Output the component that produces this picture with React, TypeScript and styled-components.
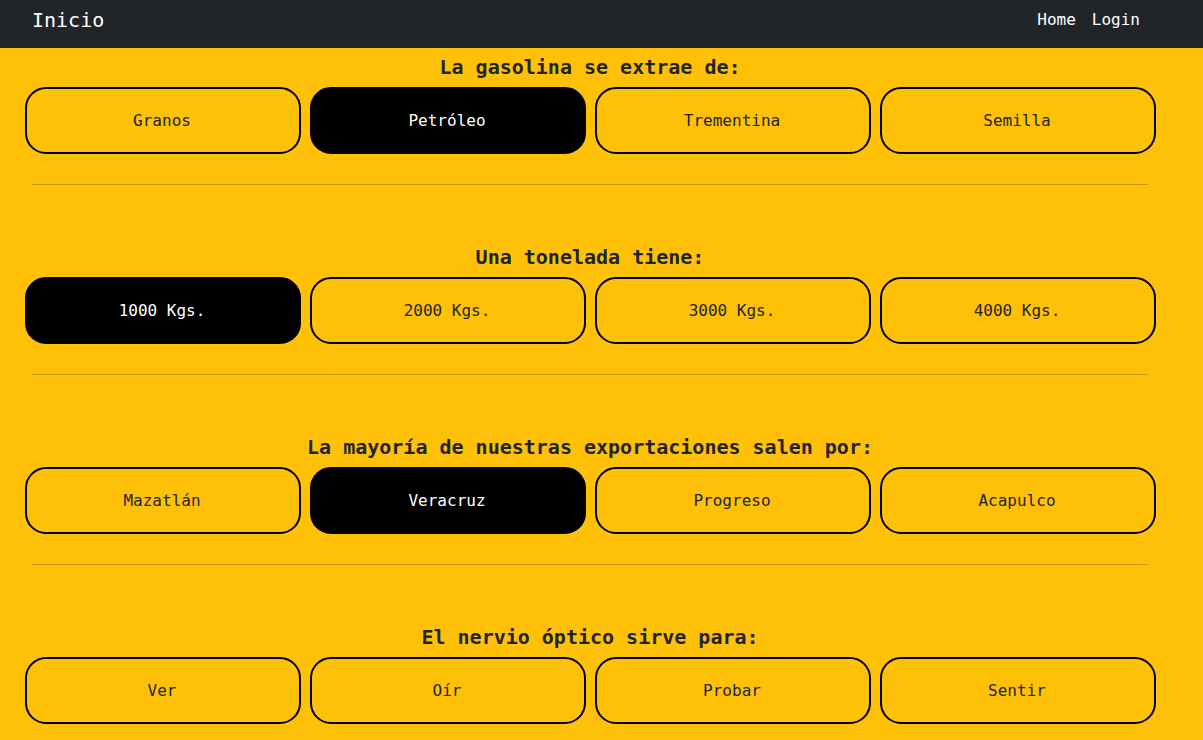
import styled, { createGlobalStyle } from "styled-components";

const GlobalStyle = createGlobalStyle`
  html, body {
    margin: 0;
    padding: 0;
    background: #ffc107;
    font-family: "DejaVu Sans Mono", monospace;
    color: #212529;
  }
  * { box-sizing: border-box; }
`

const NavBar = styled.nav`
  height: 48px;
  background: #212529;
  display: flex;
  align-items: center;
  justify-content: space-between;
  padding: 0 55px 0 32px;
`

const Brand = styled.a`
  color: #fff;
  font-size: 20px;
  line-height: 24px;
  margin-top: -9px;
  text-decoration: none;
`

const NavLinks = styled.div`
  display: flex;
  margin-top: -9px;
`

const NavLink = styled.a`
  color: #fff;
  font-size: 16px;
  line-height: 24px;
  padding: 0 8px;
  text-decoration: none;
`

const Main = styled.main`
  width: 1116px;
  margin-left: 32px;
  padding-top: 7px;
`

const Section = styled.section`
  & + & { margin-top: 60px; }
`

const Question = styled.h5`
  margin: 0 0 8px;
  font-size: 20px;
  line-height: 24px;
  font-weight: bold;
  text-align: center;
`

const Options = styled.div`
  display: grid;
  grid-template-columns: repeat(4, 276px);
  column-gap: 9px;
  margin-left: -7px;
`

const Option = styled.button<{ $selected?: boolean }>`
  height: 67px;
  border: 2px solid #000;
  border-radius: 21px;
  padding: 0 2px 0 0;
  background: ${p => (p.$selected ? "#000" : "transparent")};
  color: ${p => (p.$selected ? "#fff" : "#212529")};
  font-family: "DejaVu Sans Mono", monospace;
  font-size: 16px;
  line-height: 24px;
  cursor: pointer;
`

const Divider = styled.hr`
  margin: 30px 0 0;
  border: none;
  border-top: 1px solid #c89a10;
`

const questions = [
  { text: "La gasolina se extrae de:", options: ["Granos", "Petróleo", "Trementina", "Semilla"], selected: 1 },
  { text: "Una tonelada tiene:", options: ["1000 Kgs.", "2000 Kgs.", "3000 Kgs.", "4000 Kgs."], selected: 0 },
  { text: "La mayoría de nuestras exportaciones salen por:", options: ["Mazatlán", "Veracruz", "Progreso", "Acapulco"], selected: 1 },
  { text: "El nervio óptico sirve para:", options: ["Ver", "Oír", "Probar", "Sentir"], selected: -1 },
]

export default function App() {
  return (
    <>
      <GlobalStyle />
      <NavBar>
        <Brand href="#">Inicio</Brand>
        <NavLinks>
          <NavLink href="#">Home</NavLink>
          <NavLink href="#">Login</NavLink>
        </NavLinks>
      </NavBar>
      <Main>
        {questions.map(q => (
          <Section key={q.text}>
            <Question>{q.text}</Question>
            <Options>
              {q.options.map((o, i) => (
                <Option key={o} $selected={i === q.selected}>{o}</Option>
              ))}
            </Options>
            <Divider />
          </Section>
        ))}
      </Main>
    </>
  )
}
